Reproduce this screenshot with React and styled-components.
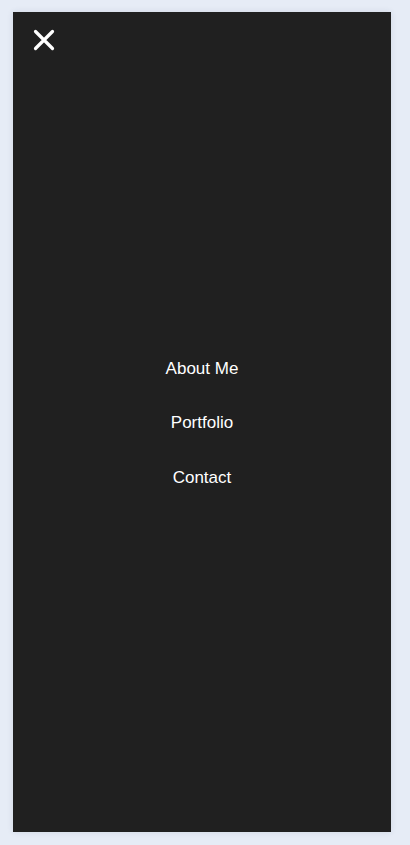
import React from 'react';
import styled, { createGlobalStyle } from 'styled-components';

const menuItems = ['About Me', 'Portfolio', 'Contact'];

function CloseIcon() {
	return (
		<svg width="22" height="22" viewBox="0 0 22 22" aria-hidden="true">
			<path
				d="M2.5 2.5 L19.5 19.5 M19.5 2.5 L2.5 19.5"
				stroke="#ffffff"
				strokeWidth="3.2"
				strokeLinecap="round"
			/>
		</svg>
	);
}

function App() {
	return (
		<>
			<GlobalStyle />
			<Page>
				<MenuPanel>
					<CloseButton aria-label="Close menu">
						<CloseIcon />
					</CloseButton>
					<NavList>
						{menuItems.map((item) => (
							<NavLink key={item} href="#">
								{item}
							</NavLink>
						))}
					</NavList>
				</MenuPanel>
			</Page>
		</>
	);
}

export default App;

const GlobalStyle = createGlobalStyle`
	html, body {
		margin: 0;
		padding: 0;
		background: #e6ecf6;
	}
	body {
		font-family: "Liberation Sans", Arial, sans-serif;
	}
`;

const Page = styled.div`
	box-sizing: border-box;
	width: 410px;
	height: 845px;
	padding: 12px 19px 13px 13px;
	display: flex;
`;

const MenuPanel = styled.nav`
	position: relative;
	flex: 1;
	display: flex;
	flex-flow: column;
	justify-content: center;
	align-items: center;
	background-color: #202020;
	box-shadow: 0 0 6px rgba(40, 60, 90, 0.12);
`;

const CloseButton = styled.button`
	position: absolute;
	top: 17px;
	left: 20px;
	display: flex;
	padding: 0;
	border: none;
	background: none;
	cursor: pointer;
`;

const NavList = styled.div`
	display: flex;
	flex-flow: column;
	align-items: center;
	gap: 34.5px;
	margin-top: 2px;
`;

const NavLink = styled.a`
	color: #ffffff;
	font-size: 17px;
	line-height: 20px;
	text-decoration: none;
`;
